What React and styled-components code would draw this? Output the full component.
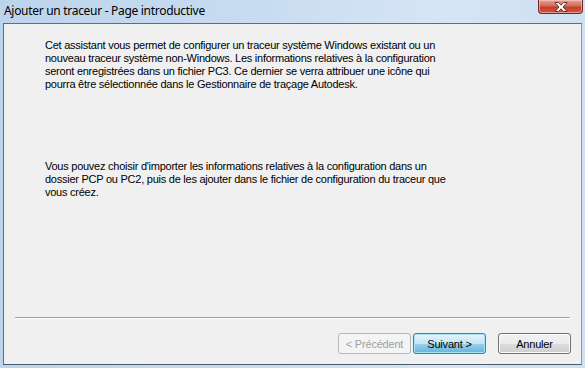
import React from 'react'
import styled, { createGlobalStyle } from 'styled-components'


// global
const Global = createGlobalStyle`
  html, body {
    margin: 0;
    padding: 0;
    background: #c9dcf0;
  }
`


// styled components
const Window = styled.div`
  width: 585px;
  height: 368px;
  box-sizing: border-box;
  display: flex;
  flex-direction: column;
  padding: 0 3px 3px 3px;
  background: linear-gradient(90deg, #bcd4ec 0%, #c8dcf1 45%, #d6e5f5 75%, #cfe0f2 100%);
  overflow: hidden;
`

const TitleBar = styled.div`
  height: 23px;
  flex: none;
  display: flex;
  align-items: flex-start;
  justify-content: space-between;
`

const Title = styled.div`
  font-family: "Noto Sans", "Open Sans", sans-serif;
  font-size: 12px;
  letter-spacing: -0.3px;
  color: #000;
  padding: 2px 0 0 1px;
  white-space: nowrap;
`

const CloseButton = styled.div`
  width: 45px;
  height: 14px;
  margin-right: -1px;
  box-sizing: border-box;
  border: 1px solid #6b2a22;
  border-top: none;
  border-radius: 0 0 4px 4px;
  background: linear-gradient(180deg, #e8a293 0%, #d46a55 45%, #c2402b 55%, #d2553e 100%);
  box-shadow: inset 0 0 0 1px rgba(255, 210, 200, 0.55);
  display: flex;
  align-items: center;
  justify-content: center;
`

const Panel = styled.div`
  flex: 1;
  display: flex;
  flex-direction: column;
  background: #f0f0f0;
  border: 1px solid #5f6e7c;
  border-right-color: #8a98a6;
  border-bottom-color: #4c5a68;
  font-family: "Liberation Sans", Arial, sans-serif;
  font-size: 11px;
  color: #000;
`

const Body = styled.div`
  flex: 1;
  padding: 15px 0 0 41px;
  display: flex;
  flex-direction: column;
  gap: 69px;
`

const Paragraph = styled.p`
  margin: 0;
  line-height: 13px;
  letter-spacing: -0.25px;
  white-space: nowrap;
`

const Separator = styled.div`
  height: 1px;
  margin: 0 11px 0 11px;
  background: #a0a0a0;
  border-bottom: 1px solid #ffffff;
`

const Footer = styled.div`
  display: flex;
  justify-content: flex-end;
  align-items: center;
  padding: 14px 10px 10px 0;
  gap: 2px;
`

const Button = styled.button`
  width: 73px;
  height: 21px;
  box-sizing: border-box;
  padding: 0;
  margin-left: ${p => p.$spaced ? '10px' : '0'};
  font-family: "Liberation Sans", Arial, sans-serif;
  font-size: 11px;
  letter-spacing: -0.2px;
  border-radius: 3px;
  color: ${p => p.disabled ? '#a0a0a0' : '#000'};
  border: 1px solid ${p => p.disabled ? '#b5b8bb' : p.$primary ? '#3c7fb1' : '#707070'};
  background: ${p => p.disabled
    ? '#f4f4f4'
    : p.$primary
      ? 'linear-gradient(180deg, #e5f4fc 0%, #c4e5f6 50%, #98d1ef 51%, #68b3db 100%)'
      : 'linear-gradient(180deg, #f2f2f2 0%, #ebebeb 50%, #dddddd 51%, #cfcfcf 100%)'};
  box-shadow: ${p => p.$primary ? 'inset 0 0 0 1px #a8e4f8' : p.disabled ? 'none' : 'inset 0 0 0 1px #fcfcfc'};
`


// components
function CloseIcon() {
  return (
    <svg width="14" height="10" viewBox="0 0 14 10">
      <path
        d="M1 0.5 H4.5 L7 3.2 L9.5 0.5 H13 L9 5 L13 9.5 H9.5 L7 6.8 L4.5 9.5 H1 L5 5 Z"
        fill="#ffffff"
        stroke="#4a2a2a"
        strokeWidth="0.9"
        strokeLinejoin="round"
      />
    </svg>
  )
}


// page component
export default function App() {
  return (
    <Window>
      <Global />
      <TitleBar>
        <Title>Ajouter un traceur - Page introductive</Title>
        <CloseButton><CloseIcon /></CloseButton>
      </TitleBar>
      <Panel>
        <Body>
          <Paragraph>
            Cet assistant vous permet de configurer un traceur système Windows existant ou un<br />
            nouveau traceur système non-Windows. Les informations relatives à la configuration<br />
            seront enregistrées dans un fichier PC3. Ce dernier se verra attribuer une icône qui<br />
            pourra être sélectionnée dans le Gestionnaire de traçage Autodesk.
          </Paragraph>
          <Paragraph>
            Vous pouvez choisir d'importer les informations relatives à la configuration dans un<br />
            dossier PCP ou PC2, puis de les ajouter dans le fichier de configuration du traceur que<br />
            vous créez.
          </Paragraph>
        </Body>
        <Separator />
        <Footer>
          <Button disabled>&lt; Précédent</Button>
          <Button $primary>Suivant &gt;</Button>
          <Button $spaced>Annuler</Button>
        </Footer>
      </Panel>
    </Window>
  )
}
